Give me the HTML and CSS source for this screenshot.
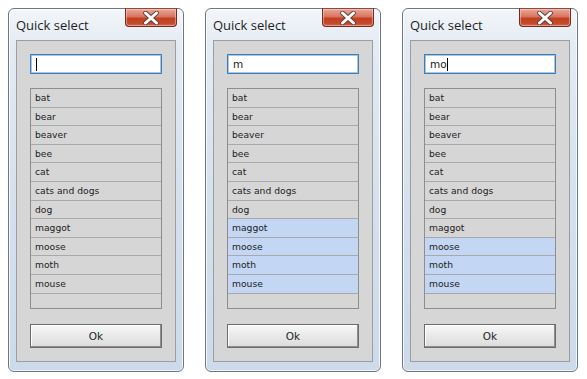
FILE: index.html
```html
<!DOCTYPE html>
<html>
<head>
<meta charset="utf-8">
<link rel="stylesheet" href="styles.css">
</head>
<body>
<div class="row">
  <div class="window">
    <div class="titlebar">
      <span class="title">Quick select</span>
      <span class="close"><svg width="20" height="14" viewBox="0 0 20 14"><path d="M4.5 2 L15.5 12 M15.5 2 L4.5 12" stroke="#5a3a36" stroke-width="4.6" stroke-linecap="round"/><path d="M4.5 2 L15.5 12 M15.5 2 L4.5 12" stroke="#ffffff" stroke-width="3" stroke-linecap="round"/></svg></span>
    </div>
    <div class="panel">
      <div class="input"><span class="caret"></span></div>
      <div class="list">
        <div class="item">bat</div>
        <div class="item">bear</div>
        <div class="item">beaver</div>
        <div class="item">bee</div>
        <div class="item">cat</div>
        <div class="item">cats and dogs</div>
        <div class="item">dog</div>
        <div class="item">maggot</div>
        <div class="item">moose</div>
        <div class="item">moth</div>
        <div class="item">mouse</div>
      </div>
      <div class="btn">Ok</div>
    </div>
  </div>

  <div class="window">
    <div class="titlebar">
      <span class="title">Quick select</span>
      <span class="close"><svg width="20" height="14" viewBox="0 0 20 14"><path d="M4.5 2 L15.5 12 M15.5 2 L4.5 12" stroke="#5a3a36" stroke-width="4.6" stroke-linecap="round"/><path d="M4.5 2 L15.5 12 M15.5 2 L4.5 12" stroke="#ffffff" stroke-width="3" stroke-linecap="round"/></svg></span>
    </div>
    <div class="panel">
      <div class="input">m</div>
      <div class="list">
        <div class="item">bat</div>
        <div class="item">bear</div>
        <div class="item">beaver</div>
        <div class="item">bee</div>
        <div class="item">cat</div>
        <div class="item">cats and dogs</div>
        <div class="item">dog</div>
        <div class="item sel">maggot</div>
        <div class="item sel">moose</div>
        <div class="item sel">moth</div>
        <div class="item sel">mouse</div>
      </div>
      <div class="btn">Ok</div>
    </div>
  </div>

  <div class="window">
    <div class="titlebar">
      <span class="title">Quick select</span>
      <span class="close"><svg width="20" height="14" viewBox="0 0 20 14"><path d="M4.5 2 L15.5 12 M15.5 2 L4.5 12" stroke="#5a3a36" stroke-width="4.6" stroke-linecap="round"/><path d="M4.5 2 L15.5 12 M15.5 2 L4.5 12" stroke="#ffffff" stroke-width="3" stroke-linecap="round"/></svg></span>
    </div>
    <div class="panel">
      <div class="input">mo<span class="caret"></span></div>
      <div class="list">
        <div class="item">bat</div>
        <div class="item">bear</div>
        <div class="item">beaver</div>
        <div class="item">bee</div>
        <div class="item">cat</div>
        <div class="item">cats and dogs</div>
        <div class="item">dog</div>
        <div class="item">maggot</div>
        <div class="item sel">moose</div>
        <div class="item sel">moth</div>
        <div class="item sel">mouse</div>
      </div>
      <div class="btn">Ok</div>
    </div>
  </div>
</div>
</body>
</html>
```

FILE: styles.css
```css
html, body {
  margin: 0;
  padding: 0;
  background: #ffffff;
}

.row {
  display: flex;
  gap: 21px;
  padding: 8px 0 0 8px;
}

.window {
  width: 176px;
  height: 364px;
  box-sizing: border-box;
  border: 1px solid #6d7784;
  border-radius: 6px;
  background: linear-gradient(#f3f6fa 0px, #e4ebf3 36px, #d4e0ed 200px, #ccdaea 100%);
  box-shadow: inset 0 0 0 1px rgba(255,255,255,0.75);
  padding: 0 7px 9px 7px;
  display: flex;
  flex-direction: column;
}

.titlebar {
  height: 31px;
  display: flex;
  justify-content: space-between;
  align-items: flex-start;
}

.title {
  font-family: "Open Sans", "Noto Sans", sans-serif;
  font-size: 13px;
  line-height: 20px;
  color: #1e1e1e;
  padding-top: 6px;
}

.close {
  width: 52px;
  height: 19px;
  box-sizing: border-box;
  margin-top: -1px;
  margin-right: -1px;
  border: 1px solid #6e2d22;
  border-top-color: #8a4a40;
  border-radius: 0 0 4px 4px;
  background: linear-gradient(#e9a99a 0%, #d8745f 45%, #c2401f 55%, #c44a2c 85%, #d86a4c 100%);
  box-shadow: inset 0 0 0 1px rgba(255,220,210,0.45);
  display: flex;
  align-items: center;
  justify-content: center;
}

.close svg {
  display: block;
}

.panel {
  flex: 1;
  border: 1px solid #9a9fa6;
  background: #d6d6d6;
  padding: 13px 13px 13px 13px;
  display: flex;
  flex-direction: column;
}

.input {
  height: 20px;
  box-sizing: border-box;
  border: 1px solid #3f7db3;
  box-shadow: inset 0 0 0 1px #a6c6e4;
  background: #ffffff;
  font-family: "DejaVu Sans", sans-serif;
  font-size: 10.5px;
  line-height: 18px;
  color: #1a1a1a;
  padding-left: 5px;
  display: flex;
  align-items: center;
}

.caret {
  display: inline-block;
  width: 1px;
  height: 13px;
  background: #000000;
}

.list {
  margin-top: 14px;
  height: 221px;
  box-sizing: border-box;
  border: 1px solid #8e8e8e;
  background: #d6d6d6;
}

.item {
  height: 18.6px;
  box-sizing: border-box;
  border-bottom: 1px solid #a9a9a9;
  font-family: "DejaVu Sans", sans-serif;
  font-size: 9.2px;
  line-height: 17.6px;
  color: #222222;
  padding-left: 4px;
}

.item.sel {
  background: #c3d6f3;
}

.btn {
  margin-top: 15px;
  height: 24px;
  box-sizing: border-box;
  border: 1px solid #6c6c6c;
  box-shadow: inset -1px -1px 0 #8e8e8e, inset 1px 1px 0 #ffffff;
  background: linear-gradient(#f7f7f7, #e9e9e9 50%, #dcdcdc);
  font-family: "DejaVu Sans", sans-serif;
  font-size: 10.5px;
  line-height: 22px;
  text-align: center;
  color: #1e1e1e;
}
```
